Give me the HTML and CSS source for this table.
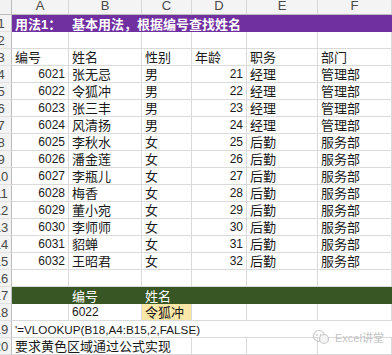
FILE: index.html
```html
<!DOCTYPE html>
<html>
<head>
<meta charset="utf-8">
<link rel="stylesheet" href="styles.css">
</head>
<body>
<div class="sheet">
  <div class="corner"></div>
  <div class="ch">A</div><div class="ch">B</div><div class="ch">C</div><div class="ch">D</div><div class="ch">E</div><div class="ch">F</div>

  <div class="rh"><span>1</span></div>
  <div class="title">用法1：</div>
  <div class="title span-rest">基本用法，根据编号查找姓名</div>

  <div class="rh"><span>2</span></div>
  <div class="c"></div><div class="c"></div><div class="c"></div><div class="c"></div><div class="c"></div><div class="c"></div>

  <div class="rh"><span>3</span></div>
  <div class="c">编号</div><div class="c">姓名</div><div class="c">性别</div><div class="c">年龄</div><div class="c">职务</div><div class="c">部门</div>

  <div class="rh"><span>4</span></div>
  <div class="c n">6021</div><div class="c">张无忌</div><div class="c">男</div><div class="c n">21</div><div class="c">经理</div><div class="c">管理部</div>
  <div class="rh"><span>5</span></div>
  <div class="c n">6022</div><div class="c">令狐冲</div><div class="c">男</div><div class="c n">22</div><div class="c">经理</div><div class="c">管理部</div>
  <div class="rh"><span>6</span></div>
  <div class="c n">6023</div><div class="c">张三丰</div><div class="c">男</div><div class="c n">23</div><div class="c">经理</div><div class="c">管理部</div>
  <div class="rh"><span>7</span></div>
  <div class="c n">6024</div><div class="c">风清扬</div><div class="c">男</div><div class="c n">24</div><div class="c">经理</div><div class="c">管理部</div>
  <div class="rh"><span>8</span></div>
  <div class="c n">6025</div><div class="c">李秋水</div><div class="c">女</div><div class="c n">25</div><div class="c">后勤</div><div class="c">服务部</div>
  <div class="rh"><span>9</span></div>
  <div class="c n">6026</div><div class="c">潘金莲</div><div class="c">女</div><div class="c n">26</div><div class="c">后勤</div><div class="c">服务部</div>
  <div class="rh"><span>10</span></div>
  <div class="c n">6027</div><div class="c">李瓶儿</div><div class="c">女</div><div class="c n">27</div><div class="c">后勤</div><div class="c">服务部</div>
  <div class="rh"><span>11</span></div>
  <div class="c n">6028</div><div class="c">梅香</div><div class="c">女</div><div class="c n">28</div><div class="c">后勤</div><div class="c">服务部</div>
  <div class="rh"><span>12</span></div>
  <div class="c n">6029</div><div class="c">董小宛</div><div class="c">女</div><div class="c n">29</div><div class="c">后勤</div><div class="c">服务部</div>
  <div class="rh"><span>13</span></div>
  <div class="c n">6030</div><div class="c">李师师</div><div class="c">女</div><div class="c n">30</div><div class="c">后勤</div><div class="c">服务部</div>
  <div class="rh"><span>14</span></div>
  <div class="c n">6031</div><div class="c">貂蝉</div><div class="c">女</div><div class="c n">31</div><div class="c">后勤</div><div class="c">服务部</div>
  <div class="rh"><span>15</span></div>
  <div class="c n">6032</div><div class="c">王昭君</div><div class="c">女</div><div class="c n">32</div><div class="c">后勤</div><div class="c">服务部</div>

  <div class="rh"><span>16</span></div>
  <div class="c"></div><div class="c"></div><div class="c"></div><div class="c"></div><div class="c"></div><div class="c"></div>

  <div class="rh"><span>17</span></div>
  <div class="g"></div><div class="g">编号</div><div class="g">姓名</div><div class="g"></div><div class="g"></div><div class="g"></div>

  <div class="rh"><span>18</span></div>
  <div class="c"></div><div class="c t">6022</div><div class="c yellow">令狐冲</div><div class="c"></div><div class="c"></div><div class="c"></div>

  <div class="rh"><span>19</span></div>
  <div class="c formula span-rest">'=VLOOKUP(B18,A4:B15,2,FALSE)</div>

  <div class="rh"><span>20</span></div>
  <div class="c span-abc">要求黄色区域通过公式实现</div><div class="c"></div><div class="c"></div><div class="c"></div>

  <div class="watermark">
    <svg width="18" height="16" viewBox="0 0 18 16">
      <circle cx="7" cy="7" r="5.5" fill="none" stroke="#c9c9c9" stroke-width="1.2"/>
      <circle cx="12" cy="10" r="4.5" fill="#f4f4f4" stroke="#c9c9c9" stroke-width="1.2"/>
      <circle cx="5" cy="6" r="0.9" fill="#c9c9c9"/>
      <circle cx="8.5" cy="6" r="0.9" fill="#c9c9c9"/>
    </svg>
    <span>Excel讲堂</span>
  </div>
</div>
</body>
</html>
```
FILE: styles.css
```css
html, body {
  margin: 0;
  padding: 0;
  background: #ffffff;
  overflow: hidden;
}

.sheet {
  position: relative;
  display: grid;
  grid-template-columns: 12px 57px 73px 50px 55px 71px 74px;
  grid-template-rows: 15px repeat(20, 17px);
  width: 392px;
  height: 355px;
  font-family: "Liberation Sans", "Noto Sans CJK SC", sans-serif;
  color: #1a1a1a;
}

.corner {
  background: #f2f2f2;
  border-right: 1px solid #bdbdbd;
  border-bottom: 1px solid #bdbdbd;
  box-sizing: border-box;
}

.ch {
  box-sizing: border-box;
  background: #f4f4f4;
  border-right: 1px solid #d6d6d6;
  border-bottom: 1px solid #bdbdbd;
  text-align: center;
  font-size: 13px;
  line-height: 11px;
  color: #4a4a4a;
}

.rh {
  box-sizing: border-box;
  background: #f3f3f3;
  border-right: 1px solid #bdbdbd;
  border-bottom: 1px solid #e0e0e0;
  display: flex;
  align-items: flex-end;
  overflow: hidden;
  font-size: 13px;
  line-height: 15px;
  color: #4a4a4a;
}

.rh span {
  flex: 0 0 27px;
  margin-left: -12.5px;
  text-align: center;
}

.c {
  box-sizing: border-box;
  border-right: 1px solid #dadada;
  border-bottom: 1px solid #dadada;
  display: flex;
  align-items: flex-end;
  padding: 0 3px;
  white-space: nowrap;
  font-size: 13px;
  line-height: 15px;
}

.n, .t {
  font-size: 12px;
}

.n {
  justify-content: flex-end;
}

.title {
  background: #7030a0;
  color: #ffffff;
  font-weight: bold;
  font-size: 13px;
  display: flex;
  align-items: center;
  padding: 0 3px;
  white-space: nowrap;
}

.span-rest {
  grid-column: 3 / -1;
}

.g {
  background: #375623;
  color: #ffffff;
  font-size: 13px;
  line-height: 15px;
  display: flex;
  align-items: flex-end;
  padding: 0 3px;
  white-space: nowrap;
}

.yellow {
  background: #fde7a7;
}

.formula {
  grid-column: 2 / -1;
  border-right: none;
  font-size: 11.7px;
}

.span-abc {
  grid-column: 2 / 5;
}

.watermark {
  position: absolute;
  left: 312px;
  top: 329px;
  display: flex;
  align-items: center;
  gap: 5px;
  font-size: 11px;
  color: #c4c4c4;
}
```
